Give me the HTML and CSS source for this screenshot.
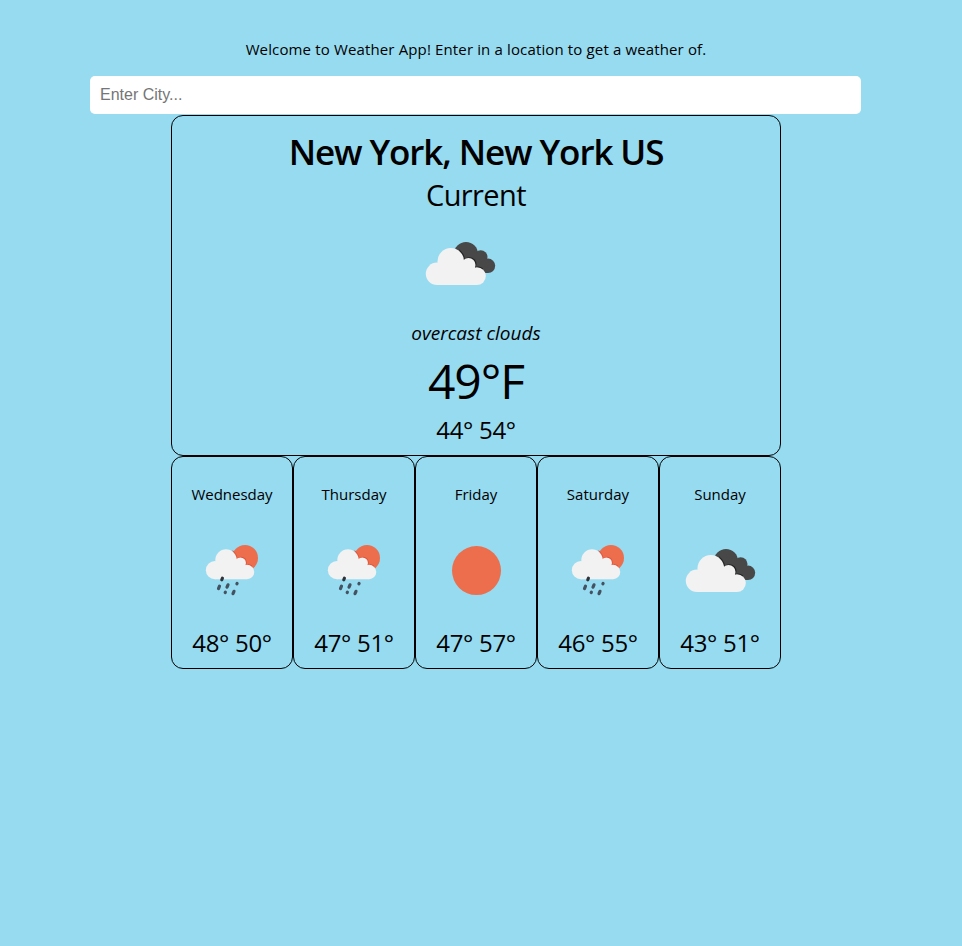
FILE: index.html
```html
<!DOCTYPE html>
<html lang="en">
<head>
<meta charset="utf-8">
<title>Weather App</title>
<link rel="stylesheet" href="styles.css">
</head>
<body>
<svg class="sprite" aria-hidden="true">
  <defs>
    <g id="cloud">
      <circle cx="27" cy="43.8" r="11.2"/>
      <circle cx="40.8" cy="31.3" r="13.3"/>
      <circle cx="58.5" cy="35" r="7"/>
      <circle cx="66.9" cy="46.1" r="8.9"/>
      <path d="M27 55h39.9V44L58 35 40 30 27 40z"/>
    </g>
    <symbol id="overcast" viewBox="0 0 100 70">
      <g fill="#484848">
        <circle cx="56" cy="24" r="12"/>
        <circle cx="70.7" cy="27" r="6.8"/>
        <circle cx="78" cy="35.8" r="7.2"/>
        <path d="M56 20l15 3 7 8v12h-8L56 32z"/>
      </g>
      <use href="#cloud" fill="#222" transform="translate(.9 -.7)" clip-path="url(#shade)"/>
      <use href="#cloud" fill="#f2f2f2"/>
    </symbol>
    <clipPath id="shade"><path d="M48 18h24v24H48z"/></clipPath>
    <symbol id="rain" viewBox="-13 2 100 70">
      <circle cx="50" cy="23" r="13" fill="#ec6e4c"/>
      <g transform="translate(-1.9 -.2) scale(.807)">
        <use href="#cloud" fill="#dc5038" transform="translate(.9 -.7)" clip-path="url(#shade)"/>
        <use href="#cloud" fill="#f2f2f2"/>
      </g>
      <g stroke="#435160" stroke-width="3.2" stroke-linecap="round">
        <path stroke="#2d3339" d="M26.8 44.8l.6-1.6"/>
        <path d="M23.5 53.6l1-2.4M32 52.2l1-2.4M41.9 48.8l.2-.4M30.2 57.5l.2-.4M38 58.7l1-2.4"/>
      </g>
    </symbol>
    <symbol id="clear" viewBox="0 0 100 70">
      <circle cx="50.5" cy="33.6" r="24.5" fill="#ec6e4c"/>
    </symbol>
  </defs>
</svg>
<main class="app">
  <p class="welcome">Welcome to Weather App! Enter in a location to get a weather of.</p>
  <input class="search" type="text" placeholder="Enter City...">
  <section class="current">
    <h1 class="place">New York, New York US</h1>
    <p class="label">Current</p>
    <svg class="icon"><use href="#overcast" x="-16"/></svg>
    <p class="summary">overcast clouds</p>
    <p class="temp">49°F</p>
    <p class="range">44° 54°</p>
  </section>
  <section class="forecast">
    <article class="day"><p class="name">Wednesday</p><svg class="icon"><use href="#rain"/></svg><p class="range">48° 50°</p></article>
    <article class="day"><p class="name">Thursday</p><svg class="icon"><use href="#rain"/></svg><p class="range">47° 51°</p></article>
    <article class="day"><p class="name">Friday</p><svg class="icon"><use href="#clear"/></svg><p class="range">47° 57°</p></article>
    <article class="day"><p class="name">Saturday</p><svg class="icon"><use href="#rain"/></svg><p class="range">46° 55°</p></article>
    <article class="day"><p class="name">Sunday</p><svg class="icon"><use href="#overcast"/></svg><p class="range">43° 51°</p></article>
  </section>
</main>
</body>
</html>
```
FILE: styles.css
```css
* { box-sizing: border-box; }
body {
  margin: 0;
  background: #97dbf0;
  color: #000;
  font-family: "Segoe UI", "Open Sans", "Noto Sans", sans-serif;
  font-size: 15px;
}
p, h1 { margin: 0; white-space: nowrap; }
.sprite { position: absolute; width: 0; height: 0; }
.app {
  width: 952px;
  padding-top: 37px;
  display: flex;
  flex-direction: column;
  align-items: center;
}
.welcome { line-height: 24px; letter-spacing: .14px; }
.search {
  width: 771px;
  height: 38px;
  margin: 15px 1px 1px 0;
  padding: 0 10px;
  border: 0;
  border-radius: 5px;
  background: #fff;
  font: 16px "Liberation Sans", Arial, sans-serif;
}
.search::placeholder { color: #757575; }
.current {
  width: 610px;
  height: 341px;
  margin-top: -1px;
  border: 1px solid #000;
  border-radius: 12px;
  display: flex;
  flex-direction: column;
  align-items: center;
}
.search + .current { margin-top: 0; }
.place { margin-top: 12px; font-size: 35px; font-weight: 600; line-height: 48px; letter-spacing: -1.1px; }
.label { font-size: 29px; line-height: 38px; letter-spacing: -.6px; }
.icon { display: block; width: 100px; height: 70px; overflow: visible; }
.icon use { width: 100px; height: 70px; }
.current .icon { margin-top: 16px; }
.summary { margin-top: 20px; font-size: 19px; font-style: italic; line-height: 26px; }
.temp { margin-top: 4px; font-size: 48px; line-height: 62px; letter-spacing: -1px; }
.range { font-size: 24px; line-height: 32px; letter-spacing: -.3px; }
.current .range { margin-top: 2px; }
.forecast { display: flex; width: 610px; }
.day {
  flex: 1;
  height: 213px;
  border: 1px solid #000;
  border-radius: 12px;
  display: flex;
  flex-direction: column;
  align-items: center;
}
.name { margin-top: 25px; line-height: 24px; }
.day .icon { margin-top: 31px; }
.day .range { margin-top: 20px; }
```
